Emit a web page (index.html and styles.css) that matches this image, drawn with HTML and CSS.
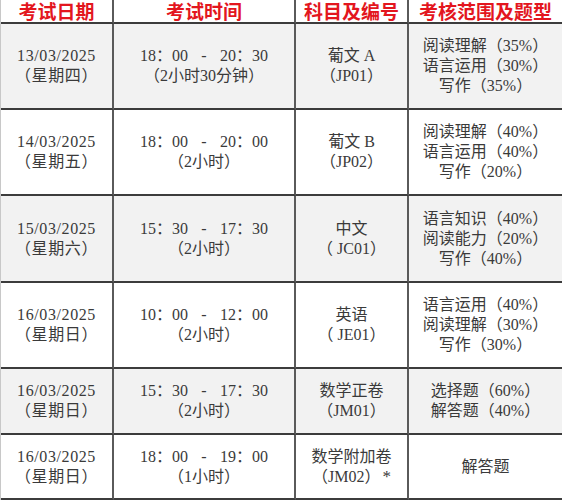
FILE: index.html
```html
<!DOCTYPE html>
<html lang="zh-CN">
<head>
<meta charset="utf-8">
<title>考试时间表</title>
<link rel="stylesheet" href="styles.css">
</head>
<body>
<div class="sheet">
  <div class="cell head"><div class="txt">考试日期</div></div>
  <div class="cell head"><div class="txt">考试时间</div></div>
  <div class="cell head"><div class="txt">科目及编号</div></div>
  <div class="cell head last"><div class="txt">考核范围及题型</div></div>

  <div class="cell shade date"><div class="txt">13/03/2025<br>（星期四）</div></div>
  <div class="cell shade"><div class="txt">18：00<span class="dash">-</span>20：30<br>（2小时30分钟）</div></div>
  <div class="cell shade"><div class="txt">葡文 A<br>（JP01）</div></div>
  <div class="cell shade last"><div class="txt">阅读理解（35%）<br>语言运用（30%）<br>写作（35%）</div></div>

  <div class="cell date"><div class="txt">14/03/2025<br>（星期五）</div></div>
  <div class="cell"><div class="txt">18：00<span class="dash">-</span>20：00<br>（2小时）</div></div>
  <div class="cell"><div class="txt">葡文 B<br>（JP02）</div></div>
  <div class="cell last"><div class="txt">阅读理解（40%）<br>语言运用（40%）<br>写作（20%）</div></div>

  <div class="cell shade date"><div class="txt">15/03/2025<br>（星期六）</div></div>
  <div class="cell shade"><div class="txt">15：30<span class="dash">-</span>17：30<br>（2小时）</div></div>
  <div class="cell shade"><div class="txt">中文<br>（ JC01）</div></div>
  <div class="cell shade last"><div class="txt">语言知识（40%）<br>阅读能力（20%）<br>写作（40%）</div></div>

  <div class="cell date"><div class="txt">16/03/2025<br>（星期日）</div></div>
  <div class="cell"><div class="txt">10：00<span class="dash">-</span>12：00<br>（2小时）</div></div>
  <div class="cell"><div class="txt">英语<br>（ JE01）</div></div>
  <div class="cell last"><div class="txt">语言运用（40%）<br>阅读理解（30%）<br>写作（30%）</div></div>

  <div class="cell shade date"><div class="txt">16/03/2025<br>（星期日）</div></div>
  <div class="cell shade"><div class="txt">15：30<span class="dash">-</span>17：30<br>（2小时）</div></div>
  <div class="cell shade"><div class="txt">数学正卷<br>（JM01）</div></div>
  <div class="cell shade last"><div class="txt">选择题（60%）<br>解答题（40%）</div></div>

  <div class="cell date"><div class="txt">16/03/2025<br>（星期日）</div></div>
  <div class="cell"><div class="txt">18：00<span class="dash">-</span>19：00<br>（1小时）</div></div>
  <div class="cell"><div class="txt">数学附加卷<br>（JM02）<span class="star">*</span></div></div>
  <div class="cell last"><div class="txt">解答题</div></div>
</div>
</body>
</html>
```

FILE: styles.css
```css
html, body {
  margin: 0;
  padding: 0;
  background: #ffffff;
}

.sheet {
  display: grid;
  grid-template-columns: 113px 182px 113px 154px;
  grid-template-rows: 24px 86px 86px 87px 86px 66px 65px;
  width: 562px;
  border-left: 1px solid #c8c8c8;
  box-sizing: border-box;
  font-family: "Liberation Serif", "Noto Sans CJK SC", serif;
  font-size: 16px;
  line-height: 20px;
  color: #3a3a3a;
}

.cell {
  display: flex;
  align-items: center;
  justify-content: center;
  border-right: 2px solid #5a5a5a;
  border-bottom: 2px solid #3c3c3c;
  box-sizing: border-box;
  background: #ffffff;
}

.txt {
  text-align: center;
  white-space: nowrap;
}

.date .txt {
  letter-spacing: 0.6px;
}

.cell.last {
  border-right: 1px solid #3c3c3c;
}

.shade {
  background: #f2f2f2;
}

.dash {
  display: inline-block;
  width: 32px;
  text-align: center;
}

.star {
  margin-left: 2px;
  font-size: 17px;
}

.head {
  font-family: "Noto Sans CJK SC", sans-serif;
  font-weight: 700;
  font-size: 19px;
  line-height: 22px;
  color: #e3161e;
}
```
